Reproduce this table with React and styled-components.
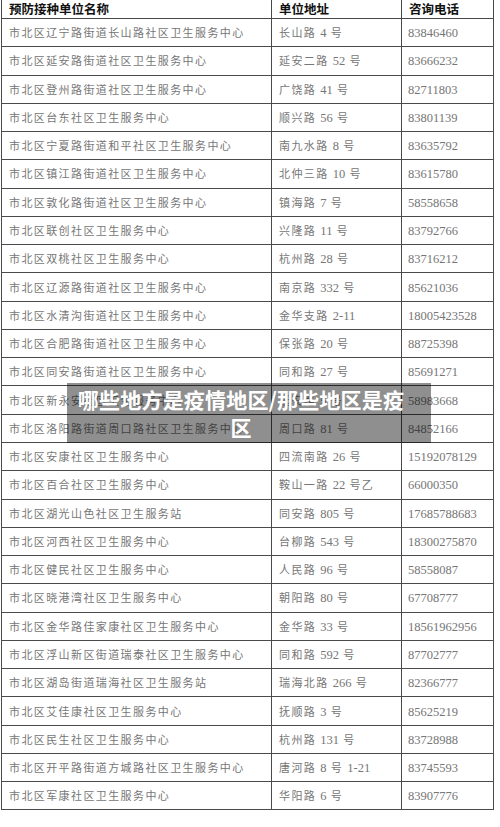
import React from "react";
import styled, { createGlobalStyle } from "styled-components";

const Global = createGlobalStyle`
  html, body { margin: 0; padding: 0; background: #fff; }
  body { width: 500px; height: 827px; overflow: hidden; }
`;

const rows = [
  ["市北区辽宁路街道长山路社区卫生服务中心", "长山路 4 号", "83846460"],
  ["市北区延安路街道社区卫生服务中心", "延安二路 52 号", "83666232"],
  ["市北区登州路街道社区卫生服务中心", "广饶路 41 号", "82711803"],
  ["市北区台东社区卫生服务中心", "顺兴路 56 号", "83801139"],
  ["市北区宁夏路街道和平社区卫生服务中心", "南九水路 8 号", "83635792"],
  ["市北区镇江路街道社区卫生服务中心", "北仲三路 10 号", "83615780"],
  ["市北区敦化路街道社区卫生服务中心", "镇海路 7 号", "58558658"],
  ["市北区联创社区卫生服务中心", "兴隆路 11 号", "83792766"],
  ["市北区双桃社区卫生服务中心", "杭州路 28 号", "83716212"],
  ["市北区辽源路街道社区卫生服务中心", "南京路 332 号", "85621036"],
  ["市北区水清沟街道社区卫生服务中心", "金华支路 2-11", "18005423528"],
  ["市北区合肥路街道社区卫生服务中心", "保张路 20 号", "88725398"],
  ["市北区同安路街道社区卫生服务中心", "同和路 27 号", "85691271"],
  ["市北区新永安社区卫生服务中心", "延安路 5 号", "58983668"],
  ["市北区洛阳路街道周口路社区卫生服务中心", "周口路 81 号", "84852166"],
  ["市北区安康社区卫生服务中心", "四流南路 26 号", "15192078129"],
  ["市北区百合社区卫生服务中心", "鞍山一路 22 号乙", "66000350"],
  ["市北区湖光山色社区卫生服务站", "同安路 805 号", "17685788683"],
  ["市北区河西社区卫生服务中心", "台柳路 543 号", "18300275870"],
  ["市北区健民社区卫生服务中心", "人民路 96 号", "58558087"],
  ["市北区晓港湾社区卫生服务中心", "朝阳路 80 号", "67708777"],
  ["市北区金华路佳家康社区卫生服务中心", "金华路 33 号", "18561962956"],
  ["市北区浮山新区街道瑞泰社区卫生服务中心", "同和路 592 号", "87702777"],
  ["市北区湖岛街道瑞海社区卫生服务站", "瑞海北路 266 号", "82366777"],
  ["市北区艾佳康社区卫生服务中心", "抚顺路 3 号", "85625219"],
  ["市北区民生社区卫生服务中心", "杭州路 131 号", "83728988"],
  ["市北区开平路街道方城路社区卫生服务中心", "唐河路 8 号 1-21", "83745593"],
  ["市北区军康社区卫生服务中心", "华阳路 6 号", "83907776"],
];

const Page = styled.div`
  position: relative;
  width: 500px;
  height: 827px;
  background: #fff;
`;

const Table = styled.table`
  margin-left: 1px;
  width: 492px;
  border-collapse: collapse;
  table-layout: fixed;
`;

const Col = styled.col`
  width: ${(p) => p.$w}px;
`;

const HeadCell = styled.th`
  height: 18px;
  padding: 0 0 0 7px;
  border: 1px solid #464646;
  border-top: none;
  text-align: left;
  font-family: "Noto Sans CJK SC", sans-serif;
  font-weight: 700;
  font-size: 12.5px;
  line-height: 18px;
  color: #111;
  white-space: nowrap;
  overflow: hidden;
`;

const Cell = styled.td`
  height: 26.28px;
  padding: 1px 0 0 ${(p) => p.$pad || 7}px;
  border: 1px solid #4a4a4a;
  text-align: left;
  font-family: "Liberation Serif", "Noto Sans CJK SC", serif;
  font-size: ${(p) => (p.$num ? 12.5 : 11)}px;
  letter-spacing: ${(p) => (p.$num ? 0 : 1.4)}px;
  line-height: 14px;
  color: #767676;
  white-space: nowrap;
  overflow: hidden;
`;

const Digits = styled.span`
  font-size: 12.5px;
  letter-spacing: 0;
`;

const Caption = styled.div`
  position: absolute;
  left: 67px;
  top: 383px;
  width: 364px;
  height: 60px;
  box-sizing: border-box;
  padding: 2px 20px 0 4px;
  background: rgba(0, 0, 0, 0.44);
  color: #fff;
  font-family: "Noto Sans CJK SC", sans-serif;
  font-weight: 700;
  font-size: 21px;
  letter-spacing: 0.2px;
  line-height: 28px;
  text-align: center;
`;

function Address({ text }) {
  const parts = text.split(/([0-9][0-9-]*)/);
  return parts.map((p, i) =>
    /^[0-9]/.test(p) ? <Digits key={i}>{p}</Digits> : <React.Fragment key={i}>{p}</React.Fragment>
  );
}

export default function App() {
  return (
    <Page>
      <Global />
      <Table>
        <colgroup>
          <Col $w={270} />
          <Col $w={130} />
          <Col $w={92} />
        </colgroup>
        <thead>
          <tr>
            <HeadCell>预防接种单位名称</HeadCell>
            <HeadCell>单位地址</HeadCell>
            <HeadCell>咨询电话</HeadCell>
          </tr>
        </thead>
        <tbody>
          {rows.map(([name, addr, tel]) => (
            <tr key={name}>
              <Cell>{name}</Cell>
              <Cell><Address text={addr} /></Cell>
              <Cell $num $pad={6}>{tel}</Cell>
            </tr>
          ))}
        </tbody>
      </Table>
      <Caption>哪些地方是疫情地区/那些地区是疫区</Caption>
    </Page>
  );
}
